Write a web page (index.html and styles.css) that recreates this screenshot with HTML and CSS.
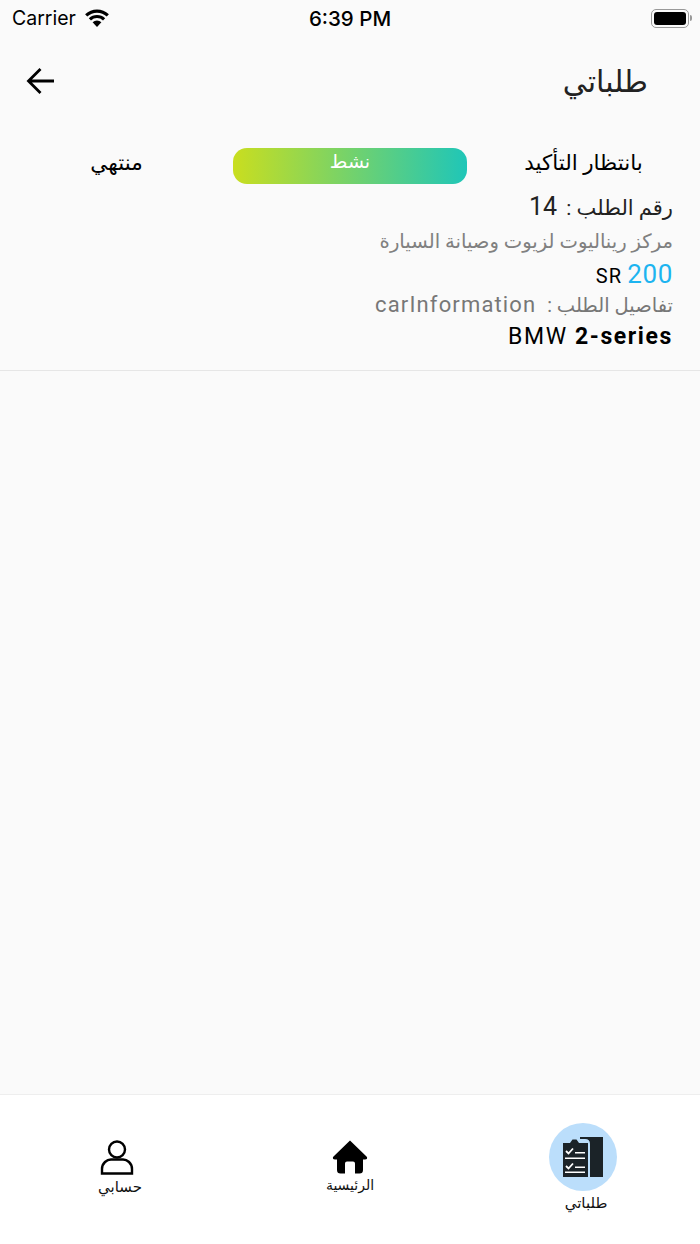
FILE: index.html
```html
<!DOCTYPE html>
<html lang="ar">
<head>
    <meta charset="UTF-8">
    <meta name="viewport" content="width=device-width, initial-scale=1.0">
    <title>طلباتي</title>
    <link rel="stylesheet" href="styles.css">
</head>
<body>
    <div class="page">
        <div class="status-bar">
            <div class="status-left">
                <span>Carrier</span>
                <svg class="wifi" width="26" height="18" viewBox="0 0 26 18">
                    <path d="M13 18 L8.6 13.2 A6.4 6.4 0 0 1 17.4 13.2 Z" fill="#000"/>
                    <path d="M5.9 10.3 A10.4 10.4 0 0 1 20.1 10.3" fill="none" stroke="#000" stroke-width="3.2"/>
                    <path d="M2.2 6.3 A15.8 15.8 0 0 1 23.8 6.3" fill="none" stroke="#000" stroke-width="3.2"/>
                </svg>
            </div>
            <div class="status-time">6:39 PM</div>
            <div class="battery">
                <div class="battery-body"><div class="battery-fill"></div></div>
                <div class="battery-cap"></div>
            </div>
        </div>

        <div class="app-bar">
            <svg width="30" height="28" viewBox="0 0 30 28">
                <path d="M28 14 H3 M14.5 2 L2.5 14 L14.5 26" fill="none" stroke="#000" stroke-width="2.8"/>
            </svg>
            <h1 class="title" dir="rtl">طلباتي</h1>
        </div>

        <div class="tabs">
            <div class="tab" dir="rtl">منتهي</div>
            <div class="tab tab-active" dir="rtl">نشط</div>
            <div class="tab" dir="rtl">بانتظار التأكيد</div>
        </div>

        <div class="order" dir="rtl">
            <div class="order-number">رقم الطلب : <span class="order-id">14</span></div>
            <div class="order-center">مركز ريناليوت لزيوت وصيانة السيارة</div>
            <div class="order-price" dir="ltr"><span class="currency">SR</span> <span class="amount">200</span></div>
            <div class="order-details">تفاصيل الطلب : <span class="latin">carInformation</span></div>
            <div class="order-car" dir="ltr">BMW <b>2-series</b></div>
        </div>

        <div class="spacer"></div>

        <nav class="bottom-nav">
            <div class="nav-item nav-item-shift">
                <div class="nav-icon">
                    <svg width="36" height="36" viewBox="0 0 36 36">
                        <circle cx="18" cy="10.5" r="8" fill="none" stroke="#000" stroke-width="2.4"/>
                        <path d="M3 34.5 V30 C3 24 8 20.5 12 20.5 H24 C28 20.5 33 24 33 30 V34.5 Z" fill="none" stroke="#000" stroke-width="2.4"/>
                    </svg>
                </div>
                <span class="nav-label" dir="rtl">حسابي</span>
            </div>
            <div class="nav-item">
                <div class="nav-icon">
                    <svg width="36" height="36" viewBox="0 0 36 36">
                        <path d="M18 1.5 L35 18 Q35.6 20.5 33 20.5 H31 V31 Q31 34.5 27.5 34.5 H23 V24.5 Q23 22.5 21 22.5 H15 Q13 22.5 13 24.5 V34.5 H8.5 Q5 34.5 5 31 V20.5 H3 Q0.4 20.5 1 18 Z" fill="#000"/>
                    </svg>
                </div>
                <span class="nav-label nav-label-home" dir="rtl">الرئيسية</span>
            </div>
            <div class="nav-item nav-item-shift">
                <div class="nav-circle">
                    <svg width="42" height="42" viewBox="0 0 42 42">
                        <path d="M18 1 H41 V41 H28 V8 Q28 3 23 3 H18 Z" fill="#1b2328"/>
                        <path d="M1 7 H8 L10.5 3.5 H14.5 L17 7 H26 V41 H1 Z" fill="#1b2328"/>
                        <path d="M4 15 L6.5 17.5 L11 12.5 M4 30 L6.5 32.5 L11 27.5" fill="none" stroke="#fff" stroke-width="1.8"/>
                        <path d="M13 16.7 H23 M3 22.3 H23 M13 31.3 H23 M3 36.3 H23" fill="none" stroke="#fff" stroke-width="1.6"/>
                    </svg>
                </div>
                <span class="nav-label" dir="rtl">طلباتي</span>
            </div>
        </nav>
    </div>
</body>
</html>
```

FILE: styles.css
```css
* {
    box-sizing: border-box;
}
body {
    margin: 0;
    background-color: #fafafa;
    font-family: Roboto, "DejaVu Sans", sans-serif;
    color: #000;
}
.page {
    display: flex;
    flex-direction: column;
    height: 1244px;
    overflow: hidden;
}
.status-bar {
    display: grid;
    grid-template-columns: 1fr auto 1fr;
    align-items: center;
    height: 36px;
    padding: 0 8px 0 12px;
    font-family: Inter, Roboto, sans-serif;
    font-size: 19.5px;
}
.status-left {
    display: flex;
    align-items: center;
    gap: 8px;
}
.status-time {
    margin-right: 4px;
    font-weight: 500;
    font-size: 20.5px;
}
.battery {
    display: flex;
    align-items: center;
    justify-self: end;
    gap: 1px;
}
.battery-body {
    width: 38px;
    height: 19px;
    padding: 2px;
    border: 1.5px solid #999;
    border-radius: 5px;
}
.battery-fill {
    height: 100%;
    background-color: #000;
    border-radius: 3px;
}
.battery-cap {
    width: 2px;
    height: 6px;
    background-color: #999;
    border-radius: 0 2px 2px 0;
}
.app-bar {
    display: flex;
    justify-content: space-between;
    align-items: center;
    height: 90px;
    padding: 0 52px 0 26px;
}
.title {
    margin: 0;
    font-size: 30px;
    font-weight: 400;
    color: #222;
}
.tabs {
    display: grid;
    grid-template-columns: 1fr 234px 1fr;
    align-items: center;
    height: 36px;
    margin-top: 22px;
}
.tab {
    height: 36px;
    line-height: 30px;
    text-align: center;
    font-size: 21.5px;
}
.tab-active {
    font-size: 19px;
    color: #fff;
    border-radius: 14px;
    background: linear-gradient(to right, #c9de1f, #1fc6b8);
    line-height: 28px;
}
.order {
    padding: 5px 27px 16px;
    border-bottom: 1px solid #e6e6e6;
}
.order-number {
    font-size: 21px;
    line-height: 36px;
    color: #222;
}
.order-id {
    margin-right: 4px;
    font-size: 25px;
    letter-spacing: 1px;
}
.order-center {
    font-size: 19.6px;
    line-height: 32px;
    color: #808080;
}
.order-price {
    height: 32px;
    text-align: right;
    line-height: 32px;
}
.currency {
    margin-right: 1px;
    font-size: 20px;
    letter-spacing: 1.2px;
}
.amount {
    font-size: 26px;
    letter-spacing: 0.6px;
    color: #1db4f0;
}
.order-details {
    font-size: 19.5px;
    line-height: 29px;
    color: #777;
}
.latin {
    margin-right: 6px;
    font-size: 22px;
    letter-spacing: 1.15px;
}
.order-car {
    text-align: right;
    font-size: 23px;
    line-height: 34px;
    letter-spacing: 1.6px;
}
.spacer {
    flex: 1;
}
.bottom-nav {
    display: grid;
    grid-template-columns: 234px 232px 234px;
    height: 150px;
    padding-top: 28px;
    background-color: #fff;
    border-top: 1px solid #eee;
}
.nav-item {
    display: flex;
    flex-direction: column;
    align-items: center;
}
.nav-icon {
    height: 52px;
    padding-top: 16px;
}
.nav-circle {
    display: flex;
    justify-content: center;
    align-items: center;
    width: 68px;
    height: 68px;
    border-radius: 50%;
    background-color: #bbdefb;
}
.nav-label {
    font-size: 14px;
    line-height: 24px;
    color: #111;
}
.nav-label-home {
    margin-top: -2px;
}
.nav-item-shift .nav-label {
    padding-left: 6px;
    font-size: 15px;
}
```
